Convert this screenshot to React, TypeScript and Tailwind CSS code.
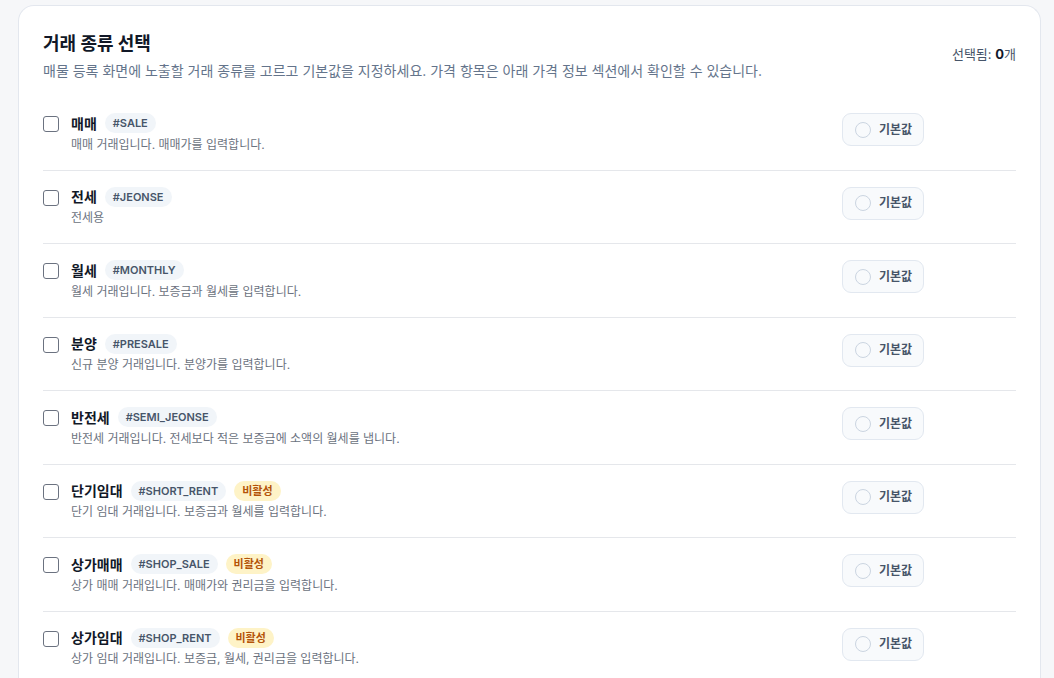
import React from "react";

type Item = { name: string; code: string; desc: string; inactive?: boolean };

const items: Item[] = [
  { name: "매매", code: "#SALE", desc: "매매 거래입니다. 매매가를 입력합니다." },
  { name: "전세", code: "#JEONSE", desc: "전세용" },
  { name: "월세", code: "#MONTHLY", desc: "월세 거래입니다. 보증금과 월세를 입력합니다." },
  { name: "분양", code: "#PRESALE", desc: "신규 분양 거래입니다. 분양가를 입력합니다." },
  { name: "반전세", code: "#SEMI_JEONSE", desc: "반전세 거래입니다. 전세보다 적은 보증금에 소액의 월세를 냅니다." },
  { name: "단기임대", code: "#SHORT_RENT", desc: "단기 임대 거래입니다. 보증금과 월세를 입력합니다.", inactive: true },
  { name: "상가매매", code: "#SHOP_SALE", desc: "상가 매매 거래입니다. 매매가와 권리금을 입력합니다.", inactive: true },
  { name: "상가임대", code: "#SHOP_RENT", desc: "상가 임대 거래입니다. 보증금, 월세, 권리금을 입력합니다.", inactive: true },
];

const font = { fontFamily: 'Inter, "Noto Sans CJK KR", "Noto Sans", sans-serif' };

export default function App() {
  return (
    <div className="min-h-[678px] bg-[#f6f7f9] pl-[18px] pr-[13px] pt-[5px]" style={font}>
      <div className="rounded-t-[16px] border border-b-0 border-[#e3e7ee] bg-white px-6 pt-6 pb-2">
        <div className="flex items-start justify-between">
          <div>
            <h2 className="text-[18px] font-bold leading-[28px] text-[#111827]">거래 종류 선택</h2>
            <p className="mt-[3px] text-[14px] leading-[20px] text-[#64748b]">
              매물 등록 화면에 노출할 거래 종류를 고르고 기본값을 지정하세요. 가격 항목은 아래 가격 정보 섹션에서 확인할 수 있습니다.
            </p>
          </div>
          <div className="mt-[14px] text-[13px] leading-[20px] text-[#475569]">
            선택됨: <span className="font-bold text-[#0f172a]">0</span>개
          </div>
        </div>
        <div className="mt-4">
          {items.map((it, i) => (
            <div
              key={it.code}
              className={`flex items-start py-4 ${i < items.length - 1 ? "border-b border-[#e5e7eb]" : ""}`}
            >
              <div className="flex flex-1 items-start gap-3">
                <div className="mt-[3px] h-4 w-4 shrink-0 rounded-[3px] border-[1.5px] border-[#6b7280] bg-white" />
                <div className="flex flex-col">
                  <div className="flex h-5 items-center gap-2">
                    <span className="text-[14px] font-bold text-[#111827]">{it.name}</span>
                    <span className="rounded-full bg-[#f1f5f9] px-2 text-[11px] font-semibold leading-[20px] text-[#475569]">
                      {it.code}
                    </span>
                    {it.inactive && (
                      <span className="rounded-full bg-[#fef3c7] px-2 text-[11px] font-bold leading-[20px] text-[#b45309]">
                        비활성
                      </span>
                    )}
                  </div>
                  <p className="mt-[2.5px] text-[12px] leading-[18px] text-[#6b7280]">{it.desc}</p>
                </div>
              </div>
              <div className="w-[174px] shrink-0">
                <button className="flex h-[33px] w-[82px] items-center gap-[8px] rounded-[9px] border border-[#e2e8f0] bg-[#f8fafc] pl-[12px]">
                  <span className="h-4 w-4 rounded-full border border-[#cbd5e1] bg-[#f8fafc]" />
                  <span className="text-[12px] font-semibold text-[#475569]">기본값</span>
                </button>
              </div>
            </div>
          ))}
        </div>
      </div>
    </div>
  );
}
